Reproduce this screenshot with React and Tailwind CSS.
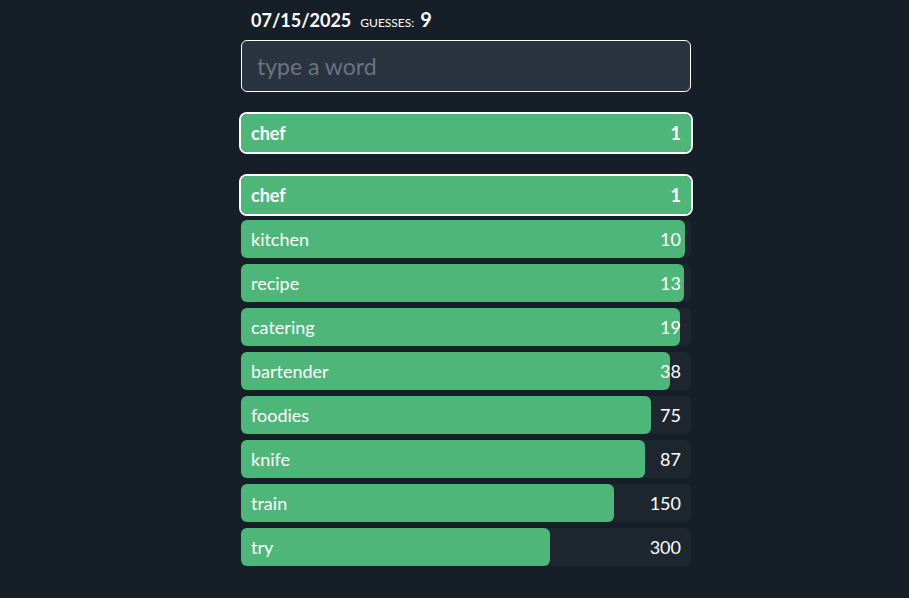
import React from "react";

const guesses = [
  { word: "chef", rank: 1, w: 450 },
  { word: "kitchen", rank: 10, w: 444 },
  { word: "recipe", rank: 13, w: 443 },
  { word: "catering", rank: 19, w: 439 },
  { word: "bartender", rank: 38, w: 429 },
  { word: "foodies", rank: 75, w: 410 },
  { word: "knife", rank: 87, w: 404 },
  { word: "train", rank: 150, w: 373 },
  { word: "try", rank: 300, w: 309 },
];

const Row = ({ g, current }) => (
  <div
    className={`relative h-[38px] rounded-md bg-[#1e2630] ${
      current ? "ring-2 ring-white" : ""
    }`}
  >
    <div
      className="absolute left-0 top-0 h-full rounded-md bg-[#4fb67a]"
      style={{ width: g.w }}
    />
    <div
      className={`relative flex h-full items-center justify-between px-[10px] text-[18px] text-white ${
        current ? "font-bold" : ""
      }`}
    >
      <span>{g.word}</span>
      <span>{g.rank}</span>
    </div>
  </div>
);

export default function App() {
  return (
    <div
      className="min-h-[598px] w-full bg-[#161e28]"
      style={{ fontFamily: "Lato, 'Noto Sans', sans-serif" }}
    >
      <div className="ml-[241px] flex w-[450px] flex-col">
        <div className="flex h-[33px] items-end gap-[9px] px-[10px] pb-[4px] text-white">
          <span className="text-[18px] font-bold leading-none">07/15/2025</span>
          <span className="text-[12px] uppercase leading-none">guesses:</span>
          <span className="-ml-[3px] text-[20px] font-bold leading-none">9</span>
        </div>
        <input
          className="mt-[7px] h-[52px] w-full rounded-md border border-white bg-[#2a3340] px-[15px] text-[23px] text-white placeholder:text-[#6b7480] focus:outline-none"
          placeholder="type a word"
        />
        <div className="mt-[22px]">
          <Row g={guesses[0]} current />
        </div>
        <div className="mt-[24px] flex flex-col gap-[6px]">
          {guesses.map((g, i) => (
            <Row key={g.word} g={g} current={i === 0} />
          ))}
        </div>
      </div>
    </div>
  );
}
